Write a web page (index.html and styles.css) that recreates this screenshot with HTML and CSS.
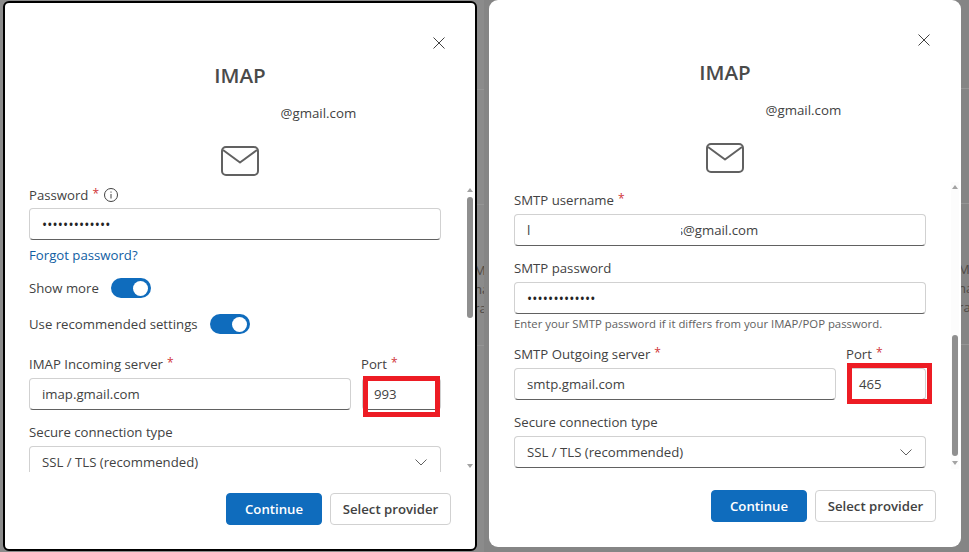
FILE: index.html
```html
<!DOCTYPE html>
<html lang="en">
<head>
<meta charset="utf-8">
<title>IMAP</title>
<link rel="stylesheet" href="styles.css">
</head>
<body>
<main class="page">
  <section class="shot shot-a">
    <div class="panel panel-a">
      <header class="head">
        <svg class="close" viewBox="0 0 12 12"><path d="M.5.5l11 11M11.500.5l-11 11"/></svg>
        <h1 class="title">IMAP</h1>
        <p class="account">@gmail.com</p>
        <svg class="mail" viewBox="0 0 38 30"><rect x="1" y="1" width="36" height="28" rx="4"/><path d="M2 4l17 12.500L36 4"/></svg>
      </header>
      <div class="scroller">
        <form class="form">
          <div class="label label-tight">Password <span class="req">*</span>
            <svg class="info" viewBox="0 0 14 14"><circle cx="7" cy="7" r="6.500"/><path d="M7 6v4.500M7 3.500v1.200"/></svg>
          </div>
          <div class="input dots">•••••••••••••</div>
          <a class="link">Forgot password?</a>
          <div class="switch-row switch-first"><span>Show more</span><span class="toggle"><i class="knob"></i></span></div>
          <div class="switch-row switch-second"><span>Use recommended settings</span><span class="toggle"><i class="knob"></i></span></div>
          <div class="row row-a">
            <div class="grow">
              <div class="label">IMAP Incoming server <span class="req">*</span></div>
              <div class="input">imap.gmail.com</div>
            </div>
            <div class="port">
              <div class="label">Port <span class="req">*</span></div>
              <div class="input input-port">993</div>
              <div class="mark mark-a"></div>
            </div>
          </div>
          <div class="label label-gap">Secure connection type</div>
          <div class="input select"><span>SSL / TLS (recommended)</span><svg class="chev" viewBox="0 0 12 7"><path d="M.5.500L6 6l5.500-5.500"/></svg></div>
        </form>
        <div class="bar">
          <i class="arrow up"></i>
          <i class="thumb thumb-a"></i>
          <i class="arrow down"></i>
        </div>
      </div>
      <footer class="foot">
        <button class="btn primary" type="button">Continue</button>
        <button class="btn" type="button">Select provider</button>
      </footer>
    </div>
    <aside class="sliver sliver-a">
      <div class="band band-1"></div>
      <div class="band band-2"><div>Mi</div><div>na</div><div>ra</div></div>
      <div class="band"></div>
    </aside>
  </section>

  <section class="shot shot-b">
    <div class="panel panel-b">
      <header class="head">
        <svg class="close" viewBox="0 0 12 12"><path d="M.5.5l11 11M11.500.5l-11 11"/></svg>
        <h1 class="title">IMAP</h1>
        <p class="account">@gmail.com</p>
        <svg class="mail" viewBox="0 0 38 30"><rect x="1" y="1" width="36" height="28" rx="4"/><path d="M2 4l17 12.500L36 4"/></svg>
      </header>
      <div class="scroller">
        <form class="form form-b">
          <div class="label">SMTP username <span class="req">*</span></div>
          <div class="input"><span class="caret">l</span><span class="redact">s</span>@gmail.com</div>
          <div class="label label-gap">SMTP password</div>
          <div class="input dots">•••••••••••••</div>
          <div class="hint">Enter your SMTP password if it differs from your IMAP/POP password.</div>
          <div class="row row-b">
            <div class="grow">
              <div class="label">SMTP Outgoing server <span class="req">*</span></div>
              <div class="input">smtp.gmail.com</div>
            </div>
            <div class="port">
              <div class="label">Port <span class="req">*</span></div>
              <div class="input input-port">465</div>
              <div class="mark mark-b"></div>
            </div>
          </div>
          <div class="label label-gap">Secure connection type</div>
          <div class="input select"><span>SSL / TLS (recommended)</span><svg class="chev" viewBox="0 0 12 7"><path d="M.5.500L6 6l5.500-5.500"/></svg></div>
        </form>
        <div class="bar bar-b">
          <i class="arrow up"></i>
          <i class="thumb thumb-b"></i>
          <i class="arrow down"></i>
        </div>
      </div>
      <footer class="foot">
        <button class="btn primary" type="button">Continue</button>
        <button class="btn" type="button">Select provider</button>
      </footer>
    </div>
    <aside class="sliver sliver-b">
      <div class="band band-1"></div>
      <div class="band band-2"><div>Mi</div><div>na</div><div>ra</div></div>
      <div class="band"></div>
    </aside>
  </section>
</main>
</body>
</html>
```

FILE: styles.css
```css
* { box-sizing: border-box; }
html, body { margin: 0; height: 100%; overflow: hidden; }
body {
  font-family: "Open Sans", "Liberation Sans", sans-serif;
  font-size: 13.2px;
  color: #424242;
}
.page { display: flex; width: 969px; height: 552px; }
.shot { display: flex; height: 552px; overflow: hidden; }
.shot-a { width: 484px; padding-left: 3px; background: #8b8b8b; }
.shot-b { width: 485px; padding-left: 5px; background: #858585; }

.panel { display: flex; flex-direction: column; background: #fff; flex: none; }
.panel-a { width: 474px; height: 550px; margin-top: 1px; border: 2px solid #000; border-radius: 6px; }
.panel-b { width: 472px; height: 547px; padding: 0 1px; border-radius: 9px; }

.head { display: flex; flex-direction: column; align-items: center; height: 182px; flex: none; }
.close { align-self: flex-end; width: 12px; height: 12px; margin: 34px 30px 0 0; fill: none; stroke: #424242; stroke-width: 1; }
.title { margin: 10px 0 0; font-size: 20.6px; line-height: 32px; font-weight: 600; color: #4a4a4a; }
.account { align-self: flex-start; margin: 12px 0 0 275.500px; line-height: 20px; font-size: 13.300px; }
.mail { width: 38px; height: 30px; margin-top: 23px; fill: none; stroke: #616161; stroke-width: 2; stroke-linejoin: round; }

.scroller { display: flex; height: 287px; flex: none; overflow: hidden; }
.form { width: 412px; margin-left: 24px; flex: none; }
.form-b { padding-top: 8px; }
.label { height: 20px; line-height: 20px; margin-bottom: 4px; white-space: nowrap; display: flex; align-items: center; gap: 4px; }
.label-tight { margin-bottom: 3px; }
.label-gap { margin-top: 12px; }
.req { color: #d13438; font-size: 12px; line-height: 12px; margin-top: -2px; }
.info { width: 14px; height: 14px; margin-left: 1px; fill: none; stroke: #424242; stroke-width: 1; }
.input {
  position: relative;
  display: flex;
  align-items: center;
  height: 32px;
  padding: 0 12px;
  background: #fff;
  border: 1px solid #d1d1d1;
  border-bottom-color: #616161;
  border-radius: 4px;
  white-space: pre;
}
.input-port { padding-left: 11px; }
.dots { font-size: 13.6px; letter-spacing: .17px; color: #242424; }
.caret { width: 154px; }
.redact { width: 2px; overflow: hidden; direction: rtl; }
.link { display: block; margin-top: 5px; line-height: 20px; color: #115ea3; }
.switch-row { display: flex; align-items: center; gap: 12px; height: 20px; }
.switch-first { margin-top: 13px; }
.switch-second { margin-top: 16px; }
.toggle { display: flex; justify-content: flex-end; align-items: center; width: 40px; height: 20px; padding-right: 3px; background: #0f6cbd; border-radius: 10px; }
.knob { display: block; width: 15px; height: 15px; border-radius: 50%; background: #fff; }
.row { display: flex; gap: 11px; }
.row-a { margin-top: 20px; }
.row-b { margin-top: 10px; }
.grow { flex: 1; min-width: 0; }
.port { position: relative; width: 79px; flex: none; }
.port .label { margin-left: -1px; margin-bottom: 4px; }
.mark { position: absolute; width: 77px; height: 41px; border: 5px solid #ed1c24; }
.mark-a { left: 1px; top: 22px; }
.mark-b { left: 0; top: 19px; width: 85px; }
.hint { height: 20px; line-height: 20px; font-size: 11.350px; color: #616161; white-space: nowrap; }
.select { justify-content: space-between; }
.chev { width: 12px; height: 7px; margin-right: 1px; fill: none; stroke: #616161; stroke-width: 1; }

.bar { display: flex; flex-direction: column; align-items: center; width: 8px; height: 287px; margin: 0 1px 0 auto; flex: none; }
.bar-b { background: #fcfcfc; }
.arrow { display: block; flex: none; width: 0; height: 0; border-left: 3.500px solid transparent; border-right: 3.500px solid transparent; }
.up { margin-top: 3px; border-bottom: 4px solid #a3a3a3; }
.down { margin-top: auto; margin-bottom: 4px; border-top: 4px solid #a3a3a3; }
.thumb { display: block; flex: none; width: 6px; height: 121px; border-radius: 3px; background: #8f8f8f; }
.thumb-a { margin-top: 5px; }
.thumb-b { margin-top: 146px; }

.foot { display: flex; justify-content: flex-end; gap: 8px; padding: 21px 24px 0 0; }
.btn {
  width: 121px;
  height: 32px;
  padding: 0;
  background: #fff;
  border: 1px solid #d1d1d1;
  border-radius: 4px;
  font: 600 13.2px "Open Sans", "Liberation Sans", sans-serif;
  color: #424242;
}
.primary { width: 96px; background: #0f6cbd; border-color: #0f6cbd; color: #fff; }

.sliver { flex: 1; min-width: 0; overflow: hidden; font-size: 13.2px; line-height: 19px; color: #4f4a46; white-space: nowrap; }
.sliver-a { padding-top: 89px; }
.sliver-b { padding-top: 88px; }
.band { border-top: 1px solid #959595; text-indent: -3px; }
.band-1 { height: 115px; }
.band-2 { height: 141px; padding-top: 56px; }
```
